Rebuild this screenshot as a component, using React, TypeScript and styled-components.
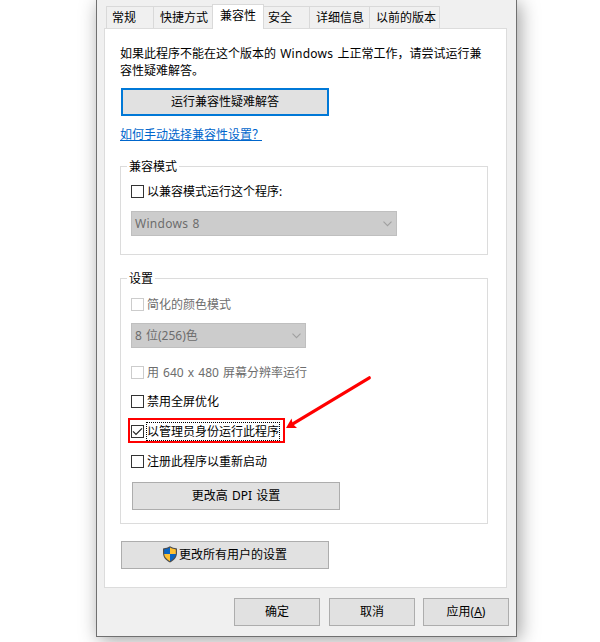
import React from 'react';
import styled, { createGlobalStyle, css } from 'styled-components';

const Global = createGlobalStyle`
  *, *::before, *::after { box-sizing: border-box; }
  html, body { margin: 0; background: #fff; }
  body { overflow: hidden; }
`;

const Page = styled.main`
  width: 600px;
  height: 642px;
  overflow: hidden;
  background: #fff;
  font: 12px/16px 'Noto Sans', 'Noto Sans CJK SC', sans-serif;
  word-spacing: 1px;
  color: #000;
  white-space: nowrap;
`;

const Dialog = styled.section`
  width: 421px;
  height: 637px;
  margin-left: 96px;
  padding: 4px 7px 0;
  background: #f0f0f0;
  border: 1px solid #707070;
  border-top: 0;
  box-shadow: 3px 3px 18px rgba(0, 0, 0, 0.38);
`;

const TabList = styled.div`
  display: flex;
  align-items: flex-end;
  height: 24px;
  padding-left: 2px;
`;

const Tab = styled.div<{ $width: number; $pad: number; $active?: boolean }>`
  position: relative;
  width: ${p => p.$width}px;
  height: 22px;
  padding: 3px 0 0 ${p => p.$pad}px;
  border: 1px solid #d9d9d9;
  border-width: 1px 0 0 1px;
  &:last-child { border-right-width: 1px; }
  ${p => p.$active && css`
    height: 25px;
    margin-bottom: -1px;
    border-right-width: 1px;
    background: #fff;
    z-index: 1;
    & + div { border-left-width: 0; }
  `}
`;

const Panel = styled.div`
  width: 403px;
  height: 560px;
  padding: 16px 15px 0;
  background: #fff;
  border: 1px solid #dcdcdc;
`;

const Intro = styled.p`
  margin: 0;
  line-height: 17px;
`;

const Latin = styled.span`
  letter-spacing: 0.28px;
`;

const Button = styled.button<{ $width: number; $focus?: boolean }>`
  display: flex;
  align-items: center;
  justify-content: center;
  width: ${p => p.$width}px;
  height: 28px;
  padding: 0;
  font: inherit;
  word-spacing: inherit;
  color: #000;
  background: #e1e1e1;
  border: ${p => (p.$focus ? '2px solid #0078d7' : '1px solid #adadad')};
`;

const PanelButton = styled(Button)<{ $top: number; $left?: number }>`
  margin: ${p => p.$top}px 0 0 ${p => p.$left ?? 1}px;
`;

const Link = styled.a`
  display: block;
  width: 142px;
  height: 15px;
  margin-top: 10px;
  line-height: 18px;
  color: #0066cc;
  border-bottom: 1px solid #0066cc;
`;

const Group = styled.section<{ $top: number; $height: number }>`
  width: 368px;
  height: ${p => p.$height}px;
  margin-top: ${p => p.$top}px;
  padding-left: 10px;
  border: 1px solid #dcdcdc;
`;

const Legend = styled.h2`
  width: fit-content;
  height: 16px;
  margin: -8px 0 0 -4px;
  padding: 0 2px;
  font: inherit;
  background: #fff;
`;

const CheckRow = styled.label<{ $top: number; $disabled?: boolean }>`
  display: flex;
  align-items: center;
  width: fit-content;
  height: 19px;
  margin-top: ${p => p.$top}px;
  gap: 2px;
  color: ${p => (p.$disabled ? '#6d6d6d' : '#000')};
`;

const Box = styled.span<{ $disabled?: boolean }>`
  width: 13px;
  height: 13px;
  border: 1px solid ${p => (p.$disabled ? '#ccc' : '#333')};
  background: #fff;
  svg { display: block; }
`;

const Label = styled.span<{ $focus?: boolean }>`
  height: 19px;
  padding: 0 1px;
  line-height: 19px;
  ${p => p.$focus && css`
    width: 134px;
    outline: 1px dotted #000;
    outline-offset: -1px;
  `}
`;

const Highlight = styled.div`
  width: 157px;
  height: 25px;
  margin: 7px 0 0 -3px;
  padding: 2px 0 0 1px;
  border: 2px solid #ff0000;
`;

const Select = styled.div<{ $width: number; $top: number }>`
  display: flex;
  align-items: center;
  justify-content: space-between;
  width: ${p => p.$width}px;
  height: 25px;
  margin-top: ${p => p.$top}px;
  padding: 0 4px 0 3px;
  color: #6d6d6d;
  background: #ccc;
  border: 1px solid #bfbfbf;
`;

const Actions = styled.footer`
  display: flex;
  padding: 10px 0 0 130px;
`;

const ActionButton = styled(Button)<{ $gap?: number }>`
  flex: none;
  margin-right: ${p => p.$gap ?? 0}px;
`;

const Mnemonic = styled.span`
  text-decoration: underline;
`;

const ArrowMark = styled.svg`
  position: absolute;
  left: 280px;
  top: 370px;
`;

const ShieldIcon = styled.svg`
  margin: -2px 1px 0 -1px;
`;

const Chevron = () => (
  <svg width="9" height="6" viewBox="0 0 9 6" fill="none" stroke="#a0a0a0" strokeWidth="1.1">
    <path d="M.5 .7 4.5 4.7 8.5 .7" />
  </svg>
);

const Shield = () => (
  <ShieldIcon width="16" height="17" viewBox="0 0 16 17">
    <path d="M8 .3 C6 1.6 4 2.2 1 2.4 V7 C1 11.5 4 14.5 8 16.6 C12 14.5 15 11.5 15 7 V2.4 C12 2.2 10 1.6 8 .3Z" fill="#4d4d4d" />
    <path d="M8 1.6 C6 2.8 4.3 3.2 2.2 3.4 V8 H8Z" fill="#0a64c2" />
    <path d="M8 1.6 C10 2.8 11.7 3.2 13.8 3.4 V8 H8Z" fill="#ffc132" />
    <path d="M2.2 8 H8 V15.2 C4.8 13.6 2.4 11 2.2 8Z" fill="#ffc132" />
    <path d="M13.8 8 H8 V15.2 C11.2 13.6 13.6 11 13.8 8Z" fill="#0a64c2" />
  </ShieldIcon>
);

type CheckProps = { text: string; top?: number; disabled?: boolean; checked?: boolean };

const Check = ({ text, top = 0, disabled, checked }: CheckProps) => (
  <CheckRow $top={top} $disabled={disabled}>
    <Box $disabled={disabled}>
      {checked && (
        <svg width="11" height="11" viewBox="0 0 11 11" fill="none" stroke="#222" strokeWidth="1.2">
          <path d="M1 5.3 4 8.3 10 2.3" />
        </svg>
      )}
    </Box>
    <Label $focus={checked}>{text}</Label>
  </CheckRow>
);

export default function App() {
  return (
    <Page>
      <Global />
      <Dialog>
        <TabList>
          <Tab $width={47} $pad={5}>常规</Tab>
          <Tab $width={59} $pad={6}>快捷方式</Tab>
          <Tab $width={52} $pad={7} $active>兼容性</Tab>
          <Tab $width={45} $pad={4}>安全</Tab>
          <Tab $width={60} $pad={6}>详细信息</Tab>
          <Tab $width={71} $pad={6}>以前的版本</Tab>
        </TabList>
        <Panel>
          <Intro>
            如果此程序不能在这个版本的 <Latin>Windows</Latin> 上正常工作，请尝试运行兼
            <br />
            容性疑难解答。
          </Intro>
          <PanelButton $width={208} $top={9} $focus>运行兼容性疑难解答</PanelButton>
          <Link>如何手动选择兼容性设置？</Link>
          <Group $top={25} $height={89}>
            <Legend>兼容模式</Legend>
            <Check text="以兼容模式运行这个程序:" top={7} />
            <Select $width={266} $top={10}><Latin>Windows 8</Latin><Chevron /></Select>
          </Group>
          <Group $top={23} $height={246}>
            <Legend>设置</Legend>
            <Check text="简化的颜色模式" top={8} disabled />
            <Select $width={175} $top={9}>8 位(256)色<Chevron /></Select>
            <Check text="用 640 x 480 屏幕分辨率运行" top={15} disabled />
            <Check text="禁用全屏优化" top={10} />
            <Highlight>
              <Check text="以管理员身份运行此程序" checked />
            </Highlight>
            <Check text="注册此程序以重新启动" top={9} />
            <PanelButton $width={208} $top={11}>更改高 DPI 设置</PanelButton>
          </Group>
          <PanelButton $width={208} $top={17}><Shield />更改所有用户的设置</PanelButton>
        </Panel>
        <Actions>
          <ActionButton $width={86} $gap={9}>确定</ActionButton>
          <ActionButton $width={86} $gap={8}>取消</ActionButton>
          <ActionButton $width={86}>应用(<Mnemonic>A</Mnemonic>)</ActionButton>
        </Actions>
      </Dialog>
      <ArrowMark width="96" height="64" viewBox="280 370 96 64">
        <path d="M369.3 377.8 292 424.4" stroke="#ff0000" strokeWidth="3.2" strokeLinecap="round" />
        <path d="M286 428 291.5 418.5 292.8 424 297 428Z" fill="#ff0000" />
      </ArrowMark>
    </Page>
  );
}
